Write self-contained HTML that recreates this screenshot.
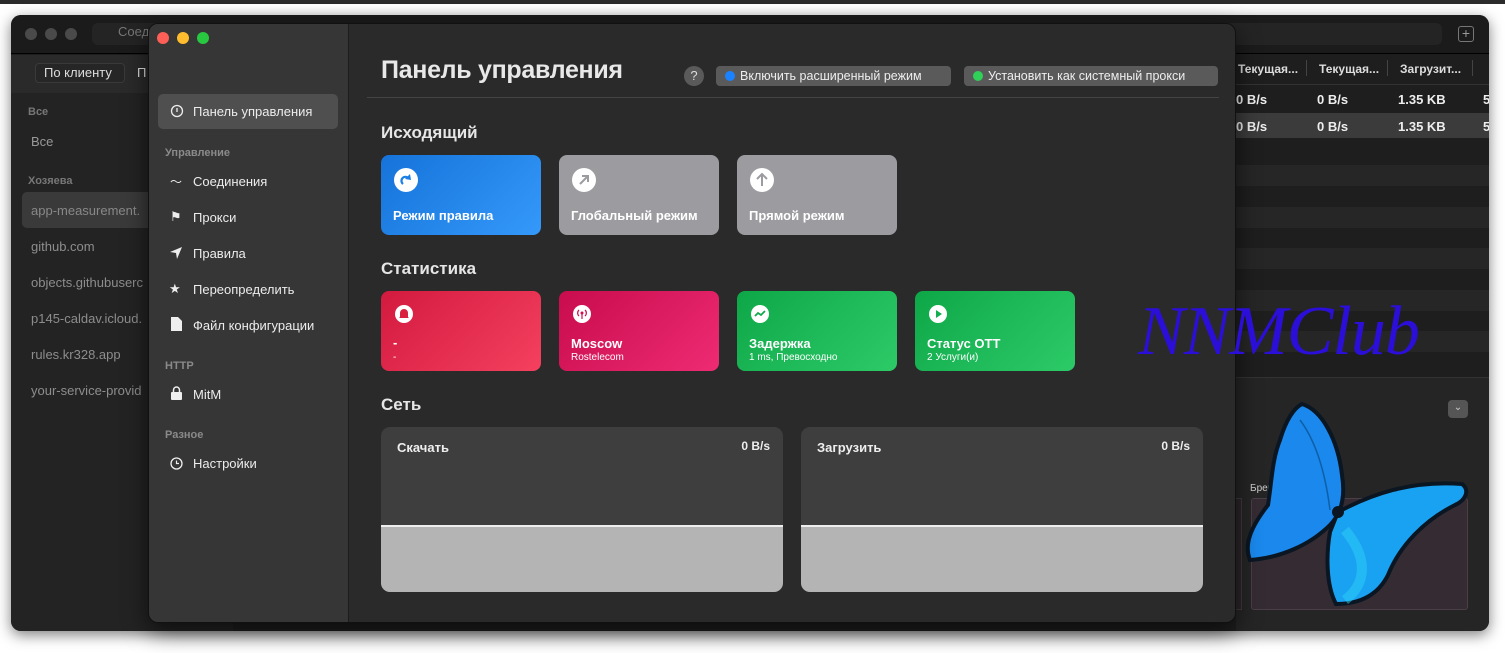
<!DOCTYPE html>
<html><head><meta charset="utf-8"><style>
*{box-sizing:border-box;margin:0;padding:0}
body{width:1505px;height:653px;background:#fff;position:relative;overflow:hidden;font-family:"Liberation Sans","DejaVu Sans",sans-serif;}
.a{position:absolute}
.topbar{left:0;top:0;width:1505px;height:4px;background:#2b2b2b}
.back{left:11px;top:15px;width:1478px;height:616px;background:#1e1e1e;border-radius:10px;overflow:hidden;box-shadow:0 4px 14px rgba(0,0,0,.5)}
.front{left:148px;top:23px;width:1088px;height:600px;background:#2a2a2a;border-radius:10px;overflow:hidden;border:1px solid #111;box-shadow:0 8px 24px rgba(0,0,0,.6)}
.side{left:0;top:0;width:200px;height:600px;background:#363636;border-right:1px solid #1c1c1c}
.dot{width:12px;height:12px;border-radius:50%}
.si{position:absolute;left:16px;font-size:13px;color:#ececec}
.sh{position:absolute;left:16px;font-size:11px;color:#8a8a8a;font-weight:bold}
.card{position:absolute;width:160px;height:80px;border-radius:8px;color:#fff}
.card .ic{position:absolute;left:13px;top:13px;width:24px;height:24px;border-radius:50%;background:#fff}
.card .t{position:absolute;left:12px;font-size:13px;font-weight:bold}
.card .s{position:absolute;left:12px;top:61px;font-size:10px}
.h2{position:absolute;left:232px;font-size:17px;font-weight:bold;color:#e6e6e6}
.net{position:absolute;top:403px;width:402px;height:165px;border-radius:9px;overflow:hidden;background:#3e3e3e}
.net .lo{position:absolute;left:0;top:98px;width:100%;height:67px;background:#b4b4b4;border-top:2px solid #eee}
.net .l{position:absolute;left:16px;top:13px;font-size:13px;font-weight:bold;color:#eee}
.net .r{position:absolute;right:13px;top:12px;font-size:12px;font-weight:bold;color:#eee}
.btn{position:absolute;top:42px;height:20px;border-radius:4px;background:#5a5a5a;color:#eee;font-size:12.5px;line-height:20px;padding-left:24px;white-space:nowrap}
.btn i{position:absolute;left:9px;top:5px;width:10px;height:10px;border-radius:50%}
.hl{position:absolute;left:20px;font-size:13px;color:#8d8d8d}
.col{position:absolute;top:61px;font-size:12px;color:#ddd;font-weight:bold}
.v{position:absolute;font-size:13px;color:#eee;font-weight:bold}
</style></head><body>
<div class="a topbar"></div>
<div class="a back">
  <div class="a" style="left:0;top:0;width:1478px;height:39px;background:#1b1b1b;border-bottom:1px solid #000"></div>
  <div class="a dot" style="left:14px;top:13px;background:#4a4a4a"></div>
  <div class="a dot" style="left:34px;top:13px;background:#4a4a4a"></div>
  <div class="a dot" style="left:54px;top:13px;background:#4a4a4a"></div>
  <div class="a" style="left:81px;top:8px;width:1350px;height:22px;background:#242424;border-radius:6px"></div>
  <div class="a" style="left:107px;top:9px;font-size:13px;color:#777">Соед</div>
  <div class="a" style="left:1447px;top:11px;width:16px;height:16px;border:1px solid #777;border-radius:3px;color:#999;font-size:14px;line-height:13px;text-align:center">+</div>
  <div class="a" style="left:0;top:40px;width:222px;height:576px;background:#232323"></div>
  <div class="a" style="left:0;top:40px;width:222px;height:38px;background:#2a2a2a"></div>
  <div class="a" style="left:24px;top:48px;width:90px;height:20px;border:1px solid #3a3a3a;border-radius:4px;background:#262626;color:#ddd;font-size:13px;line-height:18px;padding-left:8px">По клиенту</div>
  <div class="a" style="left:126px;top:50px;color:#ddd;font-size:13px">П</div>
  <div class="a" style="left:17px;top:91px;font-size:11px;color:#777;font-weight:bold">Все</div>
  <div class="hl" style="top:119px;color:#999">Все</div>
  <div class="a" style="left:17px;top:160px;font-size:11px;color:#777;font-weight:bold">Хозяева</div>
  <div class="a" style="left:11px;top:177px;width:200px;height:36px;background:#3a3a3a;border-radius:5px"></div>
  <div class="hl" style="top:188px;color:#888">app-measurement.</div>
  <div class="hl" style="top:224px">github.com</div>
  <div class="hl" style="top:260px">objects.githubuserc</div>
  <div class="hl" style="top:296px">p145-caldav.icloud.</div>
  <div class="hl" style="top:332px">rules.kr328.app</div>
  <div class="hl" style="top:368px">your-service-provid</div>
  <div class="a" style="left:1225px;top:40px;width:253px;height:30px;background:#1e1e1e;border-bottom:1px solid #333"></div>
  <div class="col" style="left:1227px;top:47px">Текущая...</div>
  <div class="a" style="left:1295px;top:45px;width:1px;height:16px;background:#444"></div>
  <div class="col" style="left:1308px;top:47px">Текущая...</div>
  <div class="a" style="left:1376px;top:45px;width:1px;height:16px;background:#444"></div>
  <div class="col" style="left:1389px;top:47px">Загрузит...</div>
  <div class="a" style="left:1461px;top:45px;width:1px;height:16px;background:#444"></div>
  <div class="a" style="left:1225px;top:98px;width:253px;height:25px;background:#3b3b3b"></div>
  <div class="v" style="left:1225px;top:77px">0 B/s</div><div class="v" style="left:1306px;top:77px">0 B/s</div><div class="v" style="left:1387px;top:77px">1.35 KB</div><div class="v" style="left:1472px;top:77px">5</div>
  <div class="v" style="left:1225px;top:104px">0 B/s</div><div class="v" style="left:1306px;top:104px">0 B/s</div><div class="v" style="left:1387px;top:104px">1.35 KB</div><div class="v" style="left:1472px;top:104px">5</div>
  <div class="a" style="left:1225px;top:150px;width:253px;height:21px;background:#262626"></div>
  <div class="a" style="left:1225px;top:192px;width:253px;height:21px;background:#262626"></div>
  <div class="a" style="left:1225px;top:233px;width:253px;height:21px;background:#262626"></div>
  <div class="a" style="left:1225px;top:275px;width:253px;height:21px;background:#262626"></div>
  <div class="a" style="left:1225px;top:316px;width:253px;height:21px;background:#262626"></div>
  <div class="a" style="left:1225px;top:362px;width:253px;height:254px;background:#252525;border-top:1px solid #333"></div>
  <div class="a" style="left:1437px;top:385px;width:20px;height:18px;background:#555;border-radius:4px;color:#ccc;font-size:10px;text-align:center;line-height:16px">⌄</div>
  <div class="a" style="left:1239px;top:468px;font-size:10px;color:#ccc">Бревно</div>
  <div class="a" style="left:1240px;top:483px;width:217px;height:112px;background:#352b33;border:1px solid #4a3f47;border-radius:3px"></div>
  <div class="a" style="left:1224px;top:483px;width:7px;height:112px;background:#2b2529;border:1px solid #403a3e"></div>
  <div class="a" style="left:1262px;top:498px;font-size:11px;color:#3aa6e8">N/A</div>
</div>
<svg class="a" style="left:0;top:0" width="1505" height="653">
  <path d="M1302 404 C1322 410 1338 440 1342 475 C1346 500 1340 515 1330 525 C1310 545 1280 558 1250 560 C1244 545 1250 528 1268 505 C1272 480 1272 460 1280 440 C1286 420 1294 408 1302 404Z" fill="#1a88ec" stroke="#0a1622" stroke-width="4"/>
  <path d="M1338 512 C1370 495 1410 480 1462 484 C1470 490 1466 500 1455 505 C1425 520 1400 545 1388 575 C1378 595 1360 604 1336 604 C1326 585 1326 555 1330 532Z" fill="#1aa2f2" stroke="#0a1622" stroke-width="4"/>
  <path d="M1300 420 C1315 440 1325 470 1330 510" stroke="#0d5fa8" stroke-width="1.5" fill="none"/>
  <path d="M1345 530 C1370 560 1365 585 1345 600" stroke="#2ccff5" stroke-width="10" fill="none" opacity=".5"/>
  <circle cx="1338" cy="512" r="6" fill="#0a1622"/>
</svg>
<div class="a front">
  <div class="a side">
    <div class="a dot" style="left:8px;top:8px;background:#fe5f57"></div>
    <div class="a dot" style="left:28px;top:8px;background:#febc2e"></div>
    <div class="a dot" style="left:48px;top:8px;background:#28c840"></div>
    <div class="a" style="left:9px;top:70px;width:180px;height:35px;background:#4f4f4f;border-radius:5px"></div>
    <svg class="a" style="left:21px;top:80px" width="14" height="14"><circle cx="7" cy="7" r="5.5" fill="none" stroke="#eee" stroke-width="1.3"/><line x1="7" y1="4" x2="7" y2="8" stroke="#eee" stroke-width="1.3"/></svg>
    <div class="si" style="left:44px;top:80px">Панель управления</div>
    <div class="sh" style="top:123px">Управление</div>
    <div class="si" style="left:21px;top:149px;font-size:12px">〜</div><div class="si" style="left:44px;top:150px">Соединения</div>
    <div class="si" style="left:21px;top:185px">⚑</div><div class="si" style="left:44px;top:186px">Прокси</div>
    <svg class="a" style="left:21px;top:223px" width="12" height="12"><polygon points="12,0 0,5 6,6 7,12" fill="#eee"/></svg><div class="si" style="left:44px;top:222px">Правила</div>
    <div class="si" style="left:20px;top:257px">★</div><div class="si" style="left:44px;top:258px">Переопределить</div>
    <svg class="a" style="left:22px;top:293px" width="11" height="14"><path d="M0 0H7L11 4V14H0Z" fill="#eee"/></svg><div class="si" style="left:44px;top:294px">Файл конфигурации</div>
    <div class="sh" style="top:336px">HTTP</div>
    <svg class="a" style="left:22px;top:362px" width="11" height="14"><rect x="0" y="6" width="11" height="8" rx="1" fill="#eee"/><path d="M2.5 6V4a3 3 0 0 1 6 0V6" fill="none" stroke="#eee" stroke-width="1.5"/></svg><div class="si" style="left:44px;top:363px">MitM</div>
    <div class="sh" style="top:405px">Разное</div>
    <svg class="a" style="left:21px;top:433px" width="13" height="13"><circle cx="6.5" cy="6.5" r="5.5" fill="none" stroke="#eee" stroke-width="1.3"/><path d="M6.5 3.5V6.5H9" fill="none" stroke="#eee" stroke-width="1.2"/></svg><div class="si" style="left:44px;top:432px">Настройки</div>
  </div>
  <div class="a" style="left:232px;top:32px;font-size:25px;font-weight:bold;color:#e8e8e8;letter-spacing:-0.3px">Панель управления</div>
  <div class="a" style="left:535px;top:42px;width:20px;height:20px;border-radius:50%;background:#5a5a5a;color:#ddd;font-size:13px;text-align:center;line-height:20px">?</div>
  <div class="btn" style="left:567px;width:235px"><i style="background:#1a82ff"></i>Включить расширенный режим</div>
  <div class="btn" style="left:815px;width:254px"><i style="background:#30d158"></i>Установить как системный прокси</div>
  <div class="a" style="left:218px;top:73px;width:852px;height:1px;background:#444"></div>
  <div class="h2" style="top:99px">Исходящий</div>
  <div class="card" style="left:232px;top:131px;background:linear-gradient(135deg,#1673d9,#3499fa)"><div class="ic"></div><svg class="a" style="left:13px;top:13px" width="24" height="24"><path d="M9 16a4 4 0 1 1 6-5" fill="none" stroke="#1a7fe6" stroke-width="2.2"/><polygon points="16,6 17,12 11,11" fill="#1a7fe6"/></svg><div class="t" style="top:53px">Режим правила</div></div>
  <div class="card" style="left:410px;top:131px;background:#9c9ba0"><div class="ic"></div><svg class="a" style="left:13px;top:13px" width="24" height="24"><path d="M8 16L16 8M10 8H16V14" fill="none" stroke="#9c9ba0" stroke-width="2"/></svg><div class="t" style="top:53px">Глобальный режим</div></div>
  <div class="card" style="left:588px;top:131px;background:#9c9ba0"><div class="ic"></div><svg class="a" style="left:13px;top:13px" width="24" height="24"><path d="M12 18V6M7 11L12 6L17 11" fill="none" stroke="#9c9ba0" stroke-width="2"/></svg><div class="t" style="top:53px">Прямой режим</div></div>
  <div class="h2" style="top:235px">Статистика</div>
  <div class="card" style="left:232px;top:267px;background:linear-gradient(135deg,#d21a3f,#f5405f)"><div class="ic" style="width:18px;height:18px;left:14px;top:14px"></div><svg class="a" style="left:14px;top:14px" width="18" height="18"><path d="M5 12V8a4 4 0 0 1 8 0V12L14 13H4Z" fill="#d8223f"/></svg><div class="t" style="top:44px">-</div><div class="s">-</div></div>
  <div class="card" style="left:410px;top:267px;background:linear-gradient(135deg,#c80c4c,#ee2b73)"><div class="ic" style="width:18px;height:18px;left:14px;top:14px"></div><svg class="a" style="left:14px;top:14px" width="18" height="18"><circle cx="9" cy="8" r="1.5" fill="#cc1050"/><path d="M9 9V14M6 5a4 4 0 0 0 0 6M12 5a4 4 0 0 1 0 6" stroke="#cc1050" stroke-width="1.2" fill="none"/></svg><div class="t" style="top:45px">Moscow</div><div class="s">Rostelecom</div></div>
  <div class="card" style="left:588px;top:267px;background:linear-gradient(135deg,#0ea748,#2dca68)"><div class="ic" style="width:18px;height:18px;left:14px;top:14px"></div><svg class="a" style="left:14px;top:14px" width="18" height="18"><path d="M4 11L7 8L10 10L14 6" stroke="#12a84c" stroke-width="1.8" fill="none"/></svg><div class="t" style="top:45px">Задержка</div><div class="s">1 ms, Превосходно</div></div>
  <div class="card" style="left:766px;top:267px;background:linear-gradient(135deg,#0ea748,#2dca68)"><div class="ic" style="width:18px;height:18px;left:14px;top:14px"></div><svg class="a" style="left:14px;top:14px" width="18" height="18"><polygon points="7,5 13,9 7,13" fill="#14ae50"/></svg><div class="t" style="top:45px">Статус OTT</div><div class="s">2 Услуги(и)</div></div>
  <div class="h2" style="top:371px">Сеть</div>
  <div class="net" style="left:232px"><div class="l">Скачать</div><div class="r">0 B/s</div><div class="lo"></div></div>
  <div class="net" style="left:652px"><div class="l">Загрузить</div><div class="r">0 B/s</div><div class="lo"></div></div>
</div>
<div class="a" style="left:1138px;top:292px;font-family:'Liberation Serif',serif;font-style:italic;font-size:70px;color:#2b0fd8;letter-spacing:-1px">NNMClub</div>
</body></html>
